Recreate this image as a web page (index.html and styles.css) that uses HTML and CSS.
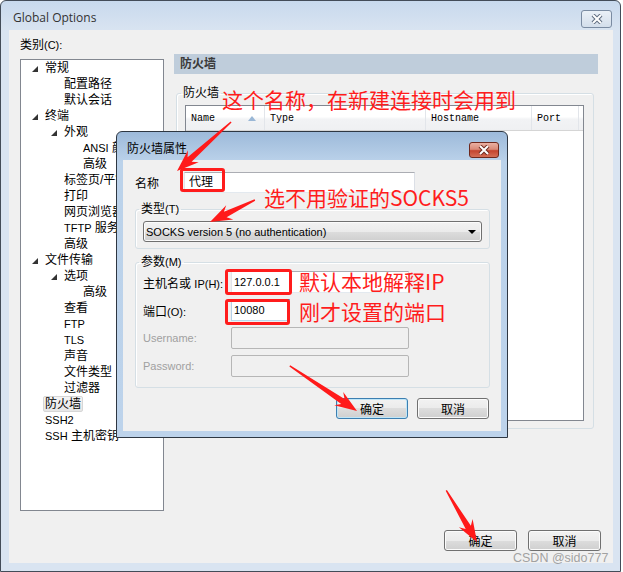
FILE: index.html
```html
<!DOCTYPE html>
<html lang="zh-CN">
<head>
  <meta charset="UTF-8">
  <title>Global Options</title>
  <link rel="stylesheet" href="styles.css">
</head>
<body>
  <div class="window">
    <div class="titlebar">
      <span class="title">Global Options</span>
      <span class="close-btn">
        <svg width="12" height="10" viewBox="0 0 12 10"><path d="M2 1L10 9M10 1L2 9" stroke="#5f6d80" stroke-width="4"/><path d="M2 1L10 9M10 1L2 9" stroke="#fff" stroke-width="2"/></svg>
      </span>
    </div>
    <div class="client">
      <div class="columns">
        <div class="category">
          <div class="cat-label">类别<span class="en">(C):</span></div>
          <div class="tree">
            <div class="node lv0"><i class="twisty"><svg width="6" height="6"><polygon points="6,0 6,6 0,6"/></svg></i><span>常规</span></div>
            <div class="node lv1"><i class="twisty"></i><span>配置路径</span></div>
            <div class="node lv1"><i class="twisty"></i><span>默认会话</span></div>
            <div class="node lv0"><i class="twisty"><svg width="6" height="6"><polygon points="6,0 6,6 0,6"/></svg></i><span>终端</span></div>
            <div class="node lv1"><i class="twisty"><svg width="6" height="6"><polygon points="6,0 6,6 0,6"/></svg></i><span>外观</span></div>
            <div class="node lv2"><i class="twisty"></i><span><span class="en">ANSI</span> 颜色</span></div>
            <div class="node lv2"><i class="twisty"></i><span>高级</span></div>
            <div class="node lv1"><i class="twisty"></i><span>标签页/平铺</span></div>
            <div class="node lv1"><i class="twisty"></i><span>打印</span></div>
            <div class="node lv1"><i class="twisty"></i><span>网页浏览器</span></div>
            <div class="node lv1"><i class="twisty"></i><span><span class="en">TFTP</span> 服务器</span></div>
            <div class="node lv1"><i class="twisty"></i><span>高级</span></div>
            <div class="node lv0"><i class="twisty"><svg width="6" height="6"><polygon points="6,0 6,6 0,6"/></svg></i><span>文件传输</span></div>
            <div class="node lv1"><i class="twisty"><svg width="6" height="6"><polygon points="6,0 6,6 0,6"/></svg></i><span>选项</span></div>
            <div class="node lv2"><i class="twisty"></i><span>高级</span></div>
            <div class="node lv1"><i class="twisty"></i><span>查看</span></div>
            <div class="node lv1"><i class="twisty"></i><span class="en">FTP</span></div>
            <div class="node lv1"><i class="twisty"></i><span class="en">TLS</span></div>
            <div class="node lv1"><i class="twisty"></i><span>声音</span></div>
            <div class="node lv1"><i class="twisty"></i><span>文件类型</span></div>
            <div class="node lv1"><i class="twisty"></i><span>过滤器</span></div>
            <div class="node lv0"><i class="twisty"></i><span class="selected">防火墙</span></div>
            <div class="node lv0"><i class="twisty"></i><span class="en">SSH2</span></div>
            <div class="node lv0"><i class="twisty"></i><span><span class="en">SSH</span> 主机密钥</span></div>
          </div>
        </div>
        <div class="page">
          <div class="page-head">防火墙</div>
          <fieldset class="group fw-group">
            <legend>防火墙</legend>
            <div class="list">
              <div class="list-head">
                <div class="col c-name">Name<svg width="8" height="5"><polygon points="4,0 8,5 0,5" fill="#9ab7d6"/></svg></div>
                <div class="col c-type">Type</div>
                <div class="col c-host">Hostname</div>
                <div class="col c-port">Port</div>
                <div class="col c-fill"></div>
              </div>
            </div>
          </fieldset>
        </div>
      </div>
      <div class="footer">
        <button class="btn">确定</button>
        <button class="btn">取消</button>
      </div>
    </div>
  </div>

  <div class="dialog">
    <div class="dlg-title">
      <span class="dlg-caption">防火墙属性</span>
      <span class="dlg-close">
        <svg width="12" height="10" viewBox="0 0 12 10"><path d="M2 1L10 9M10 1L2 9" stroke="#6e2a20" stroke-width="4"/><path d="M2 1L10 9M10 1L2 9" stroke="#fff" stroke-width="2"/></svg>
      </span>
    </div>
    <div class="dlg-client">
      <div class="name-row">
        <label class="name-label">名称</label>
        <div class="input name-input">代理</div>
      </div>
      <fieldset class="group type-group">
        <legend>类型<span class="en">(T)</span></legend>
        <div class="select">
          <span class="en">SOCKS version 5 (no authentication)</span>
          <svg width="8" height="4"><polygon points="0,0 8,0 4,4"/></svg>
        </div>
      </fieldset>
      <fieldset class="group param-group">
        <legend>参数<span class="en">(M)</span></legend>
        <div class="field">
          <label>主机名或 <span class="en">IP(H):</span></label>
          <div class="input wide en">127.0.0.1</div>
        </div>
        <div class="field">
          <label>端口<span class="en">(O):</span></label>
          <div class="input short focus en">10080</div>
        </div>
        <div class="field off">
          <label class="en">Username:</label>
          <div class="input wide"></div>
        </div>
        <div class="field off">
          <label class="en">Password:</label>
          <div class="input wide"></div>
        </div>
      </fieldset>
      <div class="dlg-buttons">
        <button class="btn default">确定</button>
        <button class="btn">取消</button>
      </div>
    </div>
  </div>

  <div class="mark-box box-name"></div>
  <div class="mark-box box-ip"></div>
  <div class="mark-box box-port"></div>

  <div class="note note-name">这个名称，在新建连接时会用到</div>
  <div class="note note-type">选不用验证的SOCKS5</div>
  <div class="note note-ip">默认本地解释IP</div>
  <div class="note note-port">刚才设置的端口</div>

  <svg class="arrows" width="623" height="572">
    <g transform="translate(177 171) rotate(137.8)"><polygon points="0,0 -22,-8 -17,-3 -73,-0.7 -73,0.7 -17,3 -22,8"/></g>
    <g transform="translate(210 222) rotate(153.9)"><polygon points="0,0 -22,-8 -17,-3 -50,-0.7 -50,0.7 -17,3 -22,8"/></g>
    <g transform="translate(357 411) rotate(33.9)"><polygon points="0,0 -22,-8 -17,-3 -81,-0.7 -81,0.7 -17,3 -22,8"/></g>
    <g transform="translate(477 542) rotate(59.2)"><polygon points="0,0 -22,-8 -17,-3 -60,-0.7 -60,0.7 -17,3 -22,8"/></g>
  </svg>

  <div class="watermark">CSDN @sido777</div>
</body>
</html>
```

FILE: styles.css
```css
* {
  box-sizing: border-box;
}
body {
  margin: 0;
  width: 623px;
  height: 572px;
  position: relative;
  overflow: hidden;
  background: #fff;
  font-family: "Liberation Sans", "Noto Sans CJK SC", sans-serif;
  font-size: 12px;
  color: #000;
}
.en {
  font-size: 11px;
}

/* outer window */
.window {
  width: 621px;
  height: 572px;
  border: 1px solid #434c58;
  border-radius: 6px 6px 0 0;
  background: linear-gradient(#c8d9ed, #d9e4f1 30px, #d9e4f1);
  padding: 0 7px 8px 8px;
  display: flex;
  flex-direction: column;
}
.titlebar {
  height: 29px;
  display: flex;
  justify-content: space-between;
  align-items: flex-start;
  padding: 9px 1px 0 4px;
}
.title {
  font-family: "Open Sans", sans-serif;
  font-size: 12px;
  line-height: 16px;
  color: #333;
}
.close-btn {
  width: 31px;
  height: 18px;
  border: 1px solid #7a8ba2;
  border-radius: 3px;
  background: linear-gradient(#eaf0f7, #d3deeb);
  display: flex;
  align-items: center;
  justify-content: center;
}
.client {
  flex: 1;
  background: #f0f0f0;
  display: flex;
  flex-direction: column;
  padding: 8px 12px 12px 11px;
}
.columns {
  flex: 1;
  display: flex;
  gap: 10px;
}
.category {
  width: 144px;
}
.cat-label {
  line-height: 14px;
  height: 14px;
  margin-bottom: 7px;
}
.tree {
  height: 452px;
  border: 1px solid #828790;
  background: #fff;
}
.node {
  height: 16px;
  display: flex;
  align-items: center;
  white-space: nowrap;
  line-height: 14px;
}
.lv0 { padding-left: 11px; }
.lv1 { padding-left: 30px; }
.lv2 { padding-left: 49px; }
.twisty {
  width: 13px;
  display: flex;
  align-items: center;
  padding-top: 2px;
}
.twisty svg {
  fill: #333;
}
.selected {
  background: linear-gradient(#f4f4f4, #e6e6e6);
  border: 1px solid #d6d6d6;
  border-radius: 2px;
  padding: 0 1px;
  margin-left: -2px;
}

/* right page */
.page {
  width: 424px;
  margin-top: 16px;
}
.page-head {
  height: 20px;
  line-height: 20px;
  background: #bfcddb;
  padding-left: 6px;
  font-weight: bold;
  color: #3a3a3a;
}
.group {
  margin: 0;
  border: 1px solid #d5dfe5;
  border-radius: 3px;
  box-shadow: inset 1px 1px 0 #fff;
}
.group legend {
  line-height: 14px;
  padding: 0 2px;
  margin-left: -4px;
}
.fw-group {
  width: 418px;
  margin: 12px 0 0 2px;
  padding: 5px 9px 7px 8px;
}
.list {
  width: 399px;
  height: 316px;
  border: 1px solid #828790;
  background: #fff;
}
.list-head {
  height: 25px;
  display: flex;
  border-bottom: 1px solid #d5d5d5;
  background: linear-gradient(#fff 0, #fff 45%, #f2f3f5 55%, #eff0f2 100%);
  font-family: "Liberation Mono", monospace;
  font-size: 10px;
}
.col {
  flex-shrink: 0;
  border-right: 1px solid #e2e5ea;
  padding: 0 8px 0 5px;
  display: flex;
  align-items: center;
  justify-content: space-between;
}
.c-name { width: 79px; }
.c-type { width: 161px; }
.c-host { width: 106px; }
.c-port { width: 47px; }
.c-fill { flex: 1; flex-shrink: 1; padding: 0; border-right: none; }
.footer {
  display: flex;
  justify-content: flex-end;
  gap: 11px;
}
.btn {
  width: 73px;
  height: 21px;
  padding: 0;
  border: 1px solid #707070;
  border-radius: 3px;
  background: linear-gradient(#f2f2f2 0, #ebebeb 50%, #dddddd 50%, #cfcfcf 100%);
  box-shadow: inset 0 0 0 1px #fbfbfb;
  font: inherit;
  color: #000;
}
.btn.default {
  border-color: #3c7fb1;
  box-shadow: inset 0 0 0 1px #bfe6f8;
}

/* firewall dialog */
.dialog {
  position: absolute;
  left: 116px;
  top: 131px;
  width: 392px;
  height: 307px;
  border: 1px solid #2e3742;
  border-radius: 6px 6px 0 0;
  background: linear-gradient(#9dbada, #bbd2ea 30px, #bdd3eb);
  padding: 0 6px 6px;
  display: flex;
  flex-direction: column;
}
.dlg-title {
  height: 28px;
  display: flex;
  justify-content: space-between;
  align-items: flex-start;
  padding: 10px 2px 0 4px;
}
.dlg-caption {
  line-height: 14px;
}
.dlg-close {
  width: 30px;
  height: 16px;
  border: 1px solid #6e281d;
  border-radius: 3px;
  background: linear-gradient(#eab0a2 0, #d98a78 45%, #c4442e 55%, #d46e56 100%);
  display: flex;
  align-items: center;
  justify-content: center;
}
.dlg-client {
  flex: 1;
  background: #f0f0f0;
  padding: 12px 11px 0 12px;
}
.name-row {
  display: flex;
  height: 21px;
  align-items: center;
}
.name-label {
  width: 49px;
}
.input {
  height: 21px;
  background: #fff;
  border: 1px solid;
  border-color: #abadb3 #dbdfe6 #e3e9ef #e2e3ea;
  padding: 0 2px;
  line-height: 19px;
}
.name-input {
  width: 231px;
  padding-left: 4px;
  font-size: 12px;
}
.type-group {
  margin-top: 9px;
  padding: 5px 7px 6px 7px;
}
.select {
  height: 21px;
  border: 1px solid #707070;
  border-radius: 3px;
  background: linear-gradient(#f2f2f2 0, #ebebeb 50%, #dddddd 50%, #cfcfcf 100%);
  box-shadow: inset 0 0 0 1px #fbfbfb;
  display: flex;
  align-items: center;
  justify-content: space-between;
  padding: 0 5px 0 2px;
}
.param-group {
  margin-top: 6px;
  padding: 2px 7px 10px 7px;
  display: flex;
  flex-direction: column;
  gap: 6px;
}
.field {
  display: flex;
  align-items: center;
  height: 22px;
}
.field label {
  width: 88px;
}
.field .input {
  height: 22px;
  line-height: 20px;
}
.input.wide { width: 178px; }
.input.short { width: 59px; }
.input.focus {
  border-color: #3d7bad #a4c9e3 #b7d9ed #b5cfe7;
}
.field.off label {
  color: #a0a0a0;
}
.field.off .input {
  background: #f0f0f0;
  border-color: #b6b6b6;
  border-radius: 2px;
}
.dlg-buttons {
  display: flex;
  justify-content: flex-end;
  gap: 9px;
  margin-top: 10px;
  padding-right: 1px;
}
.dlg-buttons .btn {
  width: 72px;
}

/* annotations */
.mark-box {
  position: absolute;
  border: 3px solid #ff1c1c;
  border-radius: 3px;
}
.box-name { left: 180px; top: 168px; width: 45px; height: 24px; }
.box-ip { left: 225px; top: 269px; width: 67px; height: 26px; }
.box-port { left: 225px; top: 299px; width: 65px; height: 26px; }
.note {
  position: absolute;
  font-family: "Noto Sans CJK SC", sans-serif;
  font-size: 21px;
  line-height: 24px;
  color: #ff1c1c;
  white-space: nowrap;
}
.note-name { left: 222px; top: 87px; }
.note-type { left: 264px; top: 185px; }
.note-ip { left: 299px; top: 269px; }
.note-port { left: 299px; top: 299px; }
.arrows {
  position: absolute;
  left: 0;
  top: 0;
  fill: #ff1a1a;
}
.watermark {
  position: absolute;
  left: 513px;
  top: 551px;
  font-family: "Liberation Sans", sans-serif;
  font-size: 12.5px;
  color: rgba(140, 140, 140, 0.8);
}
```
